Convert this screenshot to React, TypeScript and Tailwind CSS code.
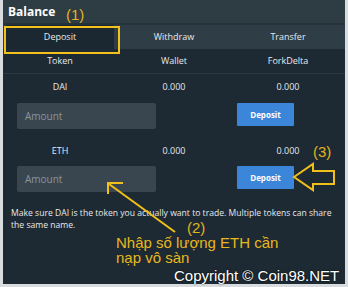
import React from 'react';

const cols = 'grid grid-cols-3 text-center';

function Row({ a, b, c }: { a: string; b: string; c: string }) {
  return (
    <div className={`${cols} h-[24px] items-center text-[9px] text-[#e6e9eb]`}>
      <span>{a}</span>
      <span>{b}</span>
      <span>{c}</span>
    </div>
  );
}

function InputRow() {
  return (
    <div className="flex items-start h-[26px] pl-[14px]">
      <div className="w-[139px] h-[26px] bg-[#3a464f] rounded-[2px] flex items-center pl-[8px] text-[10px] text-[#8a949b]">
        Amount
      </div>
      <button className="ml-[81px] w-[57px] h-[23px] bg-[#3b86d9] text-white text-[8px] font-bold rounded-[1px]">
        Deposit
      </button>
    </div>
  );
}

export default function App() {
  return (
    <div className="relative w-[348px] h-[287px] bg-[#d9dcde] font-['Open_Sans',sans-serif] overflow-hidden">
      <div className="absolute left-[3px] top-0 w-[342px] h-[284px] bg-[#1e2a33] flex flex-col">
        {/* Header */}
        <div className="h-[25px] bg-[#2e3c44] flex items-center pl-[5px] text-[12px] font-bold text-white border-b-2 border-[#253239]">
          Balance
        </div>
        {/* Tabs */}
        <div className={`${cols} h-[24px] bg-[#2f3e46] items-stretch text-[9px] text-[#e6e9eb]`}>
          <div className="flex items-center justify-center bg-[#1c2831] mx-[3px]">Deposit</div>
          <div className="flex items-center justify-center">Withdraw</div>
          <div className="flex items-center justify-center">Transfer</div>
        </div>
        <div className="border-b border-[#2c3840]">
          <Row a="Token" b="Wallet" c="ForkDelta" />
        </div>
        <div className="pt-[1px]">
          <Row a="DAI" b="0.000" c="0.000" />
        </div>
        <div className="mt-[4px]">
          <InputRow />
        </div>
        <div className="mt-[10px]">
          <Row a="ETH" b="0.000" c="0.000" />
        </div>
        <div className="mt-[3px]">
          <InputRow />
        </div>
        <p className="mt-[15px] pl-[8px] pr-[10px] text-[8.6px] leading-[12px] text-[#e6e9eb]">
          Make sure DAI is the token you actually want to trade. Multiple tokens can share the same name.
        </p>
      </div>

      {/* Annotations */}
      <div className="absolute left-[4px] top-[26px] w-[116px] h-[28px] border-2 border-[#f3c21a]" />
      <div className="font-['Liberation_Sans',Arial,sans-serif] text-[15px] leading-[15px]">
        <span className="absolute left-[66px] top-[7px] text-[#e3b51c]">(1)</span>
        <span className="absolute left-[313px] top-[144px] text-[#e3b51c]">(3)</span>
        <span className="absolute left-[187px] top-[220px] text-[#e3b51c]">(2)</span>
        <div className="absolute left-[116px] top-[235px] text-[#e8b81c] whitespace-nowrap">
          Nhập số lượng ETH cần
          <br />
          nạp vô sàn
        </div>
        <div className="absolute left-[174px] top-[268px] text-white whitespace-nowrap [text-shadow:0_0_2px_#000]">
          Copyright © Coin98.NET
        </div>
      </div>
      <svg className="absolute left-0 top-0" width="348" height="287">
        <line x1="109" y1="184" x2="175" y2="232" stroke="#f0c018" strokeWidth="2" />
        <polyline points="108,194 108,183 123,183" fill="none" stroke="#f0c018" strokeWidth="2" />
        <polygon points="294,177 313,164 313,171 334,171 334,184 313,184 313,190" fill="none" stroke="#f0c018" strokeWidth="2" />
      </svg>
    </div>
  );
}
